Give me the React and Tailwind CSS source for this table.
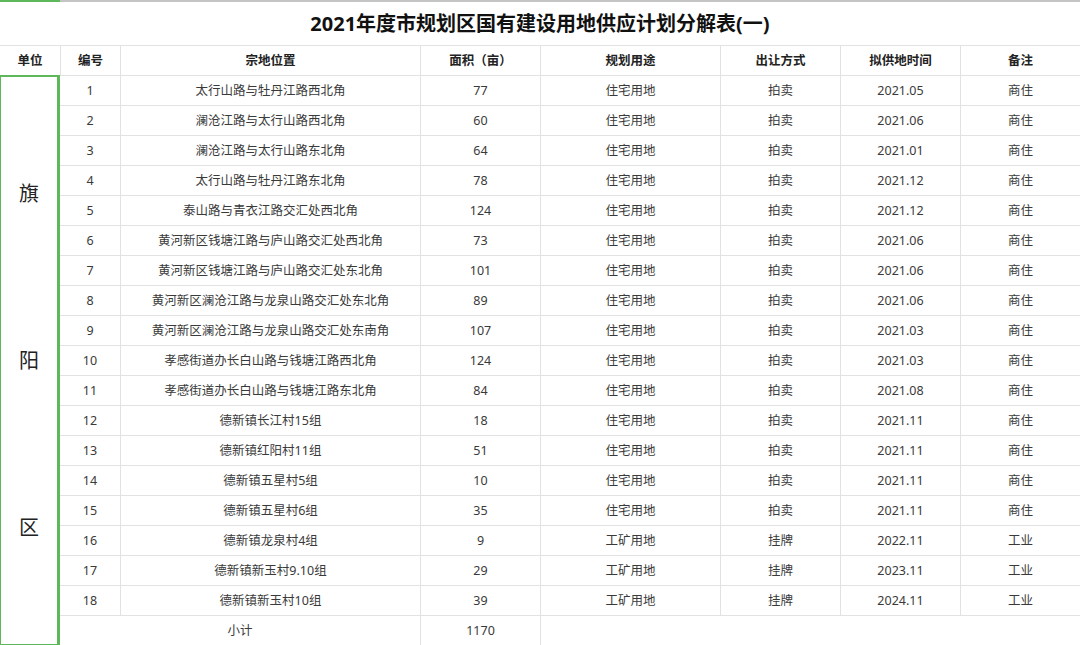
const rows = [
  [1, "太行山路与牡丹江路西北角", 77, "住宅用地", "拍卖", "2021.05", "商住"],
  [2, "澜沧江路与太行山路西北角", 60, "住宅用地", "拍卖", "2021.06", "商住"],
  [3, "澜沧江路与太行山路东北角", 64, "住宅用地", "拍卖", "2021.01", "商住"],
  [4, "太行山路与牡丹江路东北角", 78, "住宅用地", "拍卖", "2021.12", "商住"],
  [5, "泰山路与青衣江路交汇处西北角", 124, "住宅用地", "拍卖", "2021.12", "商住"],
  [6, "黄河新区钱塘江路与庐山路交汇处西北角", 73, "住宅用地", "拍卖", "2021.06", "商住"],
  [7, "黄河新区钱塘江路与庐山路交汇处东北角", 101, "住宅用地", "拍卖", "2021.06", "商住"],
  [8, "黄河新区澜沧江路与龙泉山路交汇处东北角", 89, "住宅用地", "拍卖", "2021.06", "商住"],
  [9, "黄河新区澜沧江路与龙泉山路交汇处东南角", 107, "住宅用地", "拍卖", "2021.03", "商住"],
  [10, "孝感街道办长白山路与钱塘江路西北角", 124, "住宅用地", "拍卖", "2021.03", "商住"],
  [11, "孝感街道办长白山路与钱塘江路东北角", 84, "住宅用地", "拍卖", "2021.08", "商住"],
  [12, "德新镇长江村15组", 18, "住宅用地", "拍卖", "2021.11", "商住"],
  [13, "德新镇红阳村11组", 51, "住宅用地", "拍卖", "2021.11", "商住"],
  [14, "德新镇五星村5组", 10, "住宅用地", "拍卖", "2021.11", "商住"],
  [15, "德新镇五星村6组", 35, "住宅用地", "拍卖", "2021.11", "商住"],
  [16, "德新镇龙泉村4组", 9, "工矿用地", "挂牌", "2022.11", "工业"],
  [17, "德新镇新玉村9.10组", 29, "工矿用地", "挂牌", "2023.11", "工业"],
  [18, "德新镇新玉村10组", 39, "工矿用地", "挂牌", "2024.11", "工业"],
];

// widths of the columns right of 单位
const widths = ["w-[60px]", "w-[300px]", "w-[120px]", "w-[180px]", "w-[120px]", "w-[120px]", "w-[120px]"];
const heads = ["编号", "宗地位置", "面积（亩）", "规划用途", "出让方式", "拟供地时间", "备注"];

function Cell({ w, children, bold, first }) {
  return (
    <div
      className={`${w} h-full flex items-center justify-center shrink-0 pt-[2px] ${first ? "" : "border-l border-[#e2e2e2]"} ${bold ? "font-bold text-[#222]" : "text-[#3a3a3a]"}`}
    >
      {children}
    </div>
  );
}

export default function App() {
  return (
    <div
      className="w-[1080px] h-[645px] overflow-hidden bg-white text-[12.5px]"
      style={{ fontFamily: '"Noto Sans", "Noto Sans CJK SC", sans-serif' }}
    >
      <div className="flex h-[2px]">
        <div className="w-[60px] bg-[#5cb85a]" />
        <div className="flex-1 bg-[#c4c4c4]" />
      </div>
      <div className="h-[43px] flex items-center justify-center text-[20px] font-bold text-[#111]">
        2021年度市规划区国有建设用地供应计划分解表(一)
      </div>

      <div className="flex">
        <div className="w-[60px] shrink-0">
          <div className="h-[30px] pt-[2px] border-t border-[#e2e2e2] flex items-center justify-center font-bold text-[#222]">
            单位
          </div>
          <div className="h-[570px] border-t-2 border-r-[3px] border-l border-b border-[#5cb85a] flex flex-col items-center pt-[105px] gap-[143px] text-[20px] text-[#222]">
            <span className="leading-[24px]">旗</span>
            <span className="leading-[24px]">阳</span>
            <span className="leading-[24px]">区</span>
          </div>
        </div>

        <div className="flex-1">
          <div className="h-[30px] flex border-t border-[#e2e2e2]">
            {heads.map((h, i) => (
              <Cell key={h} w={widths[i]} bold first={false}>
                {h}
              </Cell>
            ))}
          </div>
          {rows.map((r) => (
            <div key={r[0]} className="h-[30px] flex border-t border-[#e2e2e2]">
              {r.map((v, i) => (
                <Cell key={i} w={widths[i]} first={i === 0}>
                  {v}
                </Cell>
              ))}
            </div>
          ))}
          <div className="h-[30px] flex border-t border-[#e2e2e2]">
            <Cell w="w-[360px]" first>小计</Cell>
            <Cell w="w-[120px]">1170</Cell>
            <div className="flex-1 border-l border-[#e2e2e2]" />
          </div>
        </div>
      </div>
    </div>
  );
}
